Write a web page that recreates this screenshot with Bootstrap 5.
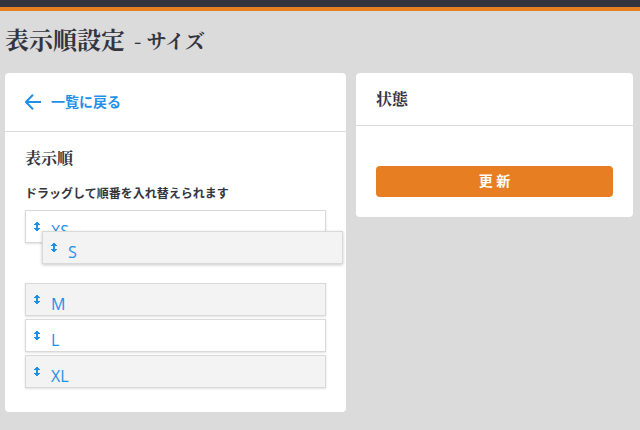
<!DOCTYPE html>
<html lang="ja">
<head>
<meta charset="utf-8">
<meta name="viewport" content="width=device-width, initial-scale=1">
<title>表示順設定 - サイズ</title>
<link href="https://cdn.jsdelivr.net/npm/bootstrap@5.3.0/dist/css/bootstrap.min.css" rel="stylesheet">
<style>
  :root { --ink: #34343f; --accent: #e77f22; --azure: #1e90e8; --rule: #dcdcdc; }
  body { background: #dbdbdb; color: var(--ink); font-family: "Open Sans", "Noto Sans CJK JP", sans-serif; }
  .topbar { height: 11px; background: #34343f; border-bottom: 4px solid var(--accent); }
  .mincho { font-family: "Noto Serif CJK JP", "Liberation Serif", "Noto Sans CJK JP", serif; font-weight: 700; }
  .page-title { font-size: 24px; line-height: 36px; padding: 10px 5px 16px; }
  .page-title small { font-size: 20px; font-weight: 700; margin-left: 3px; }
  .panels { gap: 10px; padding: 0 7px 18px 5px; margin-top: -2px; }
  .panel { border: 0; border-radius: 4px; }
  .panel-main { flex: 341 1 0; }
  .panel-side { flex: 277 1 0; }
  .panel .card-header { background: none; border-color: var(--rule); padding: 0 20px; }
  .panel-main .card-header { height: 59px; }
  .panel-side .card-header { height: 53px; }
  .panel-main .card-body { padding: 16px 20px 24px; }
  .panel-side .card-body { padding: 40px 20px 20px; }
  .section-title { font-size: 16px; line-height: 20px; }
  .hint { font-size: 12px; line-height: 16px; font-weight: 700; margin: 18px 0 8px; }
  .back-link { color: var(--azure); font-size: 14px; line-height: 20px; font-weight: 700; gap: 10px; }
  .sort-list { gap: 3px; }
  .sort-slot { height: 34px; }
  .sort-item { height: 33px; background: #fff; border: 1px solid #d9d9d9; box-shadow: 0 1px 2px rgba(0,0,0,.12); padding: 0 8px; gap: 11px; }
  .sort-item.striped { background: #f3f3f3; }
  .sort-item svg { margin-top: 11px; }
  .sort-item a { color: var(--azure); font-size: 16px; line-height: 22px; margin-top: 9px; }
  .sort-item.dragging { left: 17px; top: -15px; box-shadow: 0 1px 3px rgba(0,0,0,.22); }
  .btn-update { background: var(--accent); color: #fff; font-size: 14px; line-height: 19px; font-weight: 700; padding: 5px 6px 7px; border: 0; border-radius: 4px; }
  .btn-update:hover { background: #d67118; color: #fff; }
</style>
</head>
<body>
<svg class="d-none" aria-hidden="true">
  <symbol id="updown" viewBox="0 0 6 9"><path d="M2 0h2v1h1v1h1v1H4v3h2v1H5v1H4v1H2V8H1V7H0V6h2V3H0V2h1V1h1z" fill="#1e90e8"/></symbol>
</svg>
<header class="topbar"></header>
<main>
  <h1 class="page-title mincho m-0">表示順設定 <small>- サイズ</small></h1>
  <div class="panels d-flex align-items-start">
    <section class="card panel panel-main">
      <div class="card-header d-flex align-items-center">
        <a href="#" class="back-link d-flex align-items-center text-decoration-none">
          <svg width="16" height="16" viewBox="0 0 16 16" fill="none" stroke="currentColor" stroke-width="2" aria-hidden="true"><path d="M16 8H1M8 .8 1 8l7 7.2"/></svg>
          一覧に戻る
        </a>
      </div>
      <div class="card-body">
        <h2 class="section-title mincho m-0">表示順</h2>
        <p class="hint">ドラッグして順番を入れ替えられます</p>
        <ul class="sort-list list-unstyled d-flex flex-column m-0">
          <li class="sort-item d-flex align-items-start"><svg width="6" height="9" aria-hidden="true"><use href="#updown"/></svg><a href="#" class="text-decoration-none">XS</a></li>
          <li class="sort-slot position-relative">
            <div class="sort-item striped dragging position-absolute w-100 d-flex align-items-start"><svg width="6" height="9" aria-hidden="true"><use href="#updown"/></svg><a href="#" class="text-decoration-none">S</a></div>
          </li>
          <li class="sort-item striped d-flex align-items-start"><svg width="6" height="9" aria-hidden="true"><use href="#updown"/></svg><a href="#" class="text-decoration-none">M</a></li>
          <li class="sort-item d-flex align-items-start"><svg width="6" height="9" aria-hidden="true"><use href="#updown"/></svg><a href="#" class="text-decoration-none">L</a></li>
          <li class="sort-item striped d-flex align-items-start"><svg width="6" height="9" aria-hidden="true"><use href="#updown"/></svg><a href="#" class="text-decoration-none">XL</a></li>
        </ul>
      </div>
    </section>
    <section class="card panel panel-side">
      <div class="card-header d-flex align-items-center">
        <h2 class="section-title mincho m-0">状態</h2>
      </div>
      <div class="card-body">
        <button type="button" class="btn btn-update w-100">更 新</button>
      </div>
    </section>
  </div>
</main>
<script src="https://cdn.jsdelivr.net/npm/bootstrap@5.3.0/dist/js/bootstrap.bundle.min.js"></script>
</body>
</html>
